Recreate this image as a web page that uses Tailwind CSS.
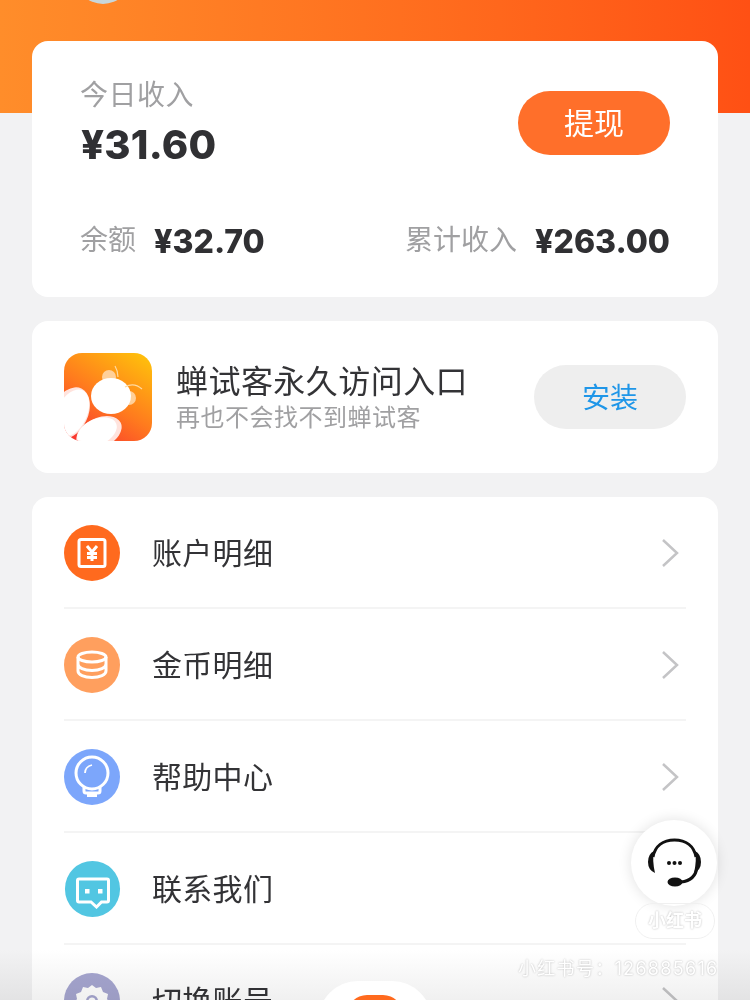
<!DOCTYPE html>
<html lang="zh-CN">
<head>
    <meta charset="UTF-8">
    <meta name="viewport" content="width=device-width, initial-scale=1.0">
    <title>我的</title>
    <script src="https://cdn.jsdelivr.net/npm/@tailwindcss/browser@4"></script>
</head>
<body class="bg-[#f2f2f3] font-['Inter','Noto_Sans_CJK_SC',sans-serif]">
    <div class="relative h-[1000px] w-[750px] overflow-hidden">
        <!-- orange header -->
        <div class="h-[113px] bg-gradient-to-r from-[#ff8d2a] to-[#ff5014]">
            <div class="relative left-[75px] top-[-52px] h-[56px] w-[56px] rounded-full bg-[#c8d6da]"></div>
        </div>

        <div class="mt-[-72px] flex flex-col gap-6 px-8">
            <!-- income -->
            <div class="flex h-[256px] flex-col justify-between rounded-2xl bg-white px-12 pt-[34px] pb-[35px]">
                <div class="flex items-start justify-between">
                    <div>
                        <div class="text-[28px] leading-[40px] tracking-[0.5px] text-[#a0a0a2]">今日收入</div>
                        <div class="mt-[6px] ml-[1px] text-[40px] leading-[48px] tracking-[0.2px] font-extrabold text-[#303033]">¥31.60</div>
                    </div>
                    <button class="mt-4 h-16 w-[152px] rounded-full bg-[#ff6f2a] text-[30px] text-white">提现</button>
                </div>
                <div class="flex items-center justify-between">
                    <div class="flex items-center gap-[18px]">
                        <span class="text-[28px] leading-10 text-[#a0a0a2]">余额</span>
                        <span class="mt-[4px] text-[32px] leading-10 font-extrabold text-[#303033]">¥32.70</span>
                    </div>
                    <div class="flex items-center gap-[18px]">
                        <span class="text-[28px] leading-10 text-[#a0a0a2]">累计收入</span>
                        <span class="mt-[4px] text-[32px] leading-10 font-extrabold text-[#303033]">¥263.00</span>
                    </div>
                </div>
            </div>

            <!-- install -->
            <div class="flex h-[152px] items-center rounded-2xl bg-white px-8">
                <svg class="h-[88px] w-[88px] shrink-0" viewBox="0 0 88 88">
                    <defs>
                        <linearGradient id="appbg" x1="0.85" y1="0" x2="0.2" y2="1">
                            <stop offset="0" stop-color="#ffbe0c"/>
                            <stop offset="0.55" stop-color="#ff7a1e"/>
                            <stop offset="1" stop-color="#f9382f"/>
                        </linearGradient>
                        <clipPath id="appclip"><rect width="88" height="88" rx="18"/></clipPath>
                    </defs>
                    <g clip-path="url(#appclip)">
                        <rect width="88" height="88" fill="url(#appbg)"/>
                        <ellipse cx="6" cy="60" rx="18" ry="27" transform="rotate(25 6 60)" fill="#ffe3dd"/>
                        <ellipse cx="8" cy="60" rx="15" ry="25" transform="rotate(25 8 60)" fill="#fff"/>
                        <ellipse cx="35" cy="80" rx="24" ry="15" transform="rotate(-25 35 80)" fill="#ffe3dd"/>
                        <ellipse cx="33" cy="79" rx="21" ry="13" transform="rotate(-25 33 79)" fill="#fff"/>
                        <circle cx="45" cy="24" r="7" fill="#ffd09a"/>
                        <circle cx="65" cy="45" r="7" fill="#ffd09a"/>
                        <ellipse cx="47" cy="43" rx="20" ry="18" fill="#fff"/>
                        <path d="M51 13q3 5 3 11M61 34q9-5 17 2" fill="none" stroke="#ffd9a0" stroke-width="1.200"/>
                    </g>
                </svg>
                <div class="ml-6 flex-1 pt-[2px]">
                    <div class="text-[32px] leading-[38px] tracking-[0.45px] text-[#333336]">蝉试客永久访问入口</div>
                    <div class="mt-[2px] text-2xl leading-[30px] tracking-[0.5px] text-[#a0a0a2]">再也不会找不到蝉试客</div>
                </div>
                <button class="h-16 w-[152px] rounded-full bg-[#eeeeee] pt-[2px] text-[28px] text-[#1f96e8]">安装</button>
            </div>

            <!-- menu -->
            <div class="rounded-t-2xl bg-white px-8">
                <div class="flex h-[112px] items-center border-b-2 border-[#f4f4f4] pt-0.5">
                    <span class="flex h-14 w-14 items-center justify-center rounded-full bg-[#ff6a1e]">
                        <svg class="h-8 w-8" viewBox="0 0 32 32" fill="none" stroke="#fff" stroke-width="3">
                            <rect x="3" y="2.500" width="26" height="27" rx="2"/>
                            <path d="M11 9l5 6 5-6M16 15v9M11 16.500h10M11 20.500h10" stroke-width="3"/>
                        </svg>
                    </span>
                    <span class="ml-8 flex-1 text-[30px] tracking-[0.3px] text-[#333336]">账户明细</span>
                    <svg class="mr-1.5 h-[30px] w-5" viewBox="0 0 20 30" fill="none" stroke="#c4c4c6" stroke-width="2.500"><path d="M3 2l14 13L3 28"/></svg>
                </div>
                <div class="flex h-[112px] items-center border-b-2 border-[#f4f4f4] pt-0.5">
                    <span class="flex h-14 w-14 items-center justify-center rounded-full bg-[#ff9f5e]">
                        <svg class="h-9 w-9" viewBox="0 0 36 36" fill="none" stroke="#fff" stroke-width="3">
                            <ellipse cx="18" cy="10" rx="14" ry="5"/>
                            <path d="M4 10v14c0 3.500 6 6.500 14 6.500s14-3 14-6.500V10M4 17c0 3.500 6 6.500 14 6.500s14-3 14-6.500"/>
                        </svg>
                    </span>
                    <span class="ml-8 flex-1 text-[30px] tracking-[0.3px] text-[#333336]">金币明细</span>
                    <svg class="mr-1.5 h-[30px] w-5" viewBox="0 0 20 30" fill="none" stroke="#c4c4c6" stroke-width="2.500"><path d="M3 2l14 13L3 28"/></svg>
                </div>
                <div class="flex h-[112px] items-center border-b-2 border-[#f4f4f4] pt-0.5">
                    <span class="flex h-14 w-14 items-center justify-center rounded-full bg-[#7ca6fb]">
                        <svg class="h-11 w-11" viewBox="0 0 44 44" fill="none" stroke="#fff" stroke-width="3">
                            <circle cx="22" cy="18" r="16"/>
                            <path d="M14 32v4q0 2 2 2h12q2 0 2-2v-4"/>
                            <path d="M17 40.500h10" stroke-width="3"/>
                            <path d="M15 18c0-4 3-7 7-8" stroke-width="1.800"/>
                        </svg>
                    </span>
                    <span class="ml-8 flex-1 text-[30px] tracking-[0.3px] text-[#333336]">帮助中心</span>
                    <svg class="mr-1.5 h-[30px] w-5" viewBox="0 0 20 30" fill="none" stroke="#c4c4c6" stroke-width="2.500"><path d="M3 2l14 13L3 28"/></svg>
                </div>
                <div class="flex h-[112px] items-center border-b-2 border-[#f4f4f4] pt-0.5">
                    <span class="ml-[1px] flex h-14 w-[55px] items-center justify-center rounded-full bg-[#52c6e2]">
                        <svg class="mt-1 h-9 w-9" viewBox="0 0 36 36" fill="none" stroke="#fff" stroke-width="3">
                            <path d="M4 6h28a1.500 1.500 0 0 1 1.500 1.500v20a1.500 1.500 0 0 1-1.500 1.500h-5.500l-5 5-5.500-5H4a1.500 1.500 0 0 1-1.500-1.500v-20A1.500 1.500 0 0 1 4 6z"/>
                            <rect x="10" y="16" width="4.500" height="4.500" fill="#fff" stroke="none"/>
                            <rect x="23" y="16" width="4.500" height="4.500" fill="#fff" stroke="none"/>
                        </svg>
                    </span>
                    <span class="ml-8 flex-1 text-[30px] tracking-[0.3px] text-[#333336]">联系我们</span>
                </div>
                <div class="flex h-[112px] items-center">
                    <span class="flex h-14 w-14 items-center justify-center rounded-full bg-[#a6a6d0]">
                        <svg class="h-10 w-10" viewBox="0 0 40 40">
                            <path d="M20 4l4 3 5-1 2 5 5 2-1 5 3 4-3 4 1 5-5 2-2 5-5-1-4 3-4-3-5 1-2-5-5-2 1-5-3-4 3-4-1-5 5-2 2-5 5 1z" fill="#fff"/>
                            <circle cx="20" cy="20" r="6" fill="#a6a6d0"/>
                            <circle cx="20" cy="20" r="3.500" fill="#fff"/>
                        </svg>
                    </span>
                    <span class="ml-8 flex-1 text-[30px] tracking-[0.3px] text-[#333336]">切换账号</span>
                    <svg class="mr-1.5 h-[30px] w-5" viewBox="0 0 20 30" fill="none" stroke="#c4c4c6" stroke-width="2.500"><path d="M3 2l14 13L3 28"/></svg>
                </div>
            </div>
        </div>

        <!-- bottom fade + tab bump -->
        <div class="absolute bottom-0 left-0 h-[50px] w-full bg-gradient-to-b from-white to-[#f0f0f0] mix-blend-multiply"></div>
        <div class="absolute left-[318px] top-[981px] h-10 w-[114px] rounded-t-[40px] bg-white">
            <div class="mx-auto mt-[14px] h-10 w-[56px] rounded-full bg-[#ff6a1e]"></div>
        </div>

        <!-- customer service button -->
        <div class="absolute left-[631px] top-[820px] flex h-[86px] w-[86px] items-center justify-center rounded-full bg-white shadow-[0_0_14px_rgba(0,0,0,0.12)]">
            <svg class="h-[56px] w-[56px]" viewBox="0 0 56 56" fill="none">
                <path d="M7 22C9 11 17 5 28.500 5S48 11 50 22M51 32c-1 9-7 14-16 15" stroke="#111" stroke-width="3"/>
                <path d="M8 16q-2 9 1 22Q2 35 2 27t6-11zM49 16q2 9-1 22q7-3 7-11t-6-11z" fill="#111"/>
                <ellipse cx="29" cy="47" rx="7.500" ry="4.500" fill="#111"/>
                <circle cx="23" cy="28" r="2" fill="#111"/>
                <circle cx="28.500" cy="28" r="2" fill="#111"/>
                <circle cx="34" cy="28" r="2" fill="#111"/>
            </svg>
        </div>

        <!-- watermark -->
        <div class="absolute left-[635px] top-[903px] flex h-[36px] w-[80px] items-center justify-center rounded-full border border-[#f0f0f0] text-lg font-bold text-white blur-[0.6px] [text-shadow:0_0_2px_rgba(0,0,0,0.3)]">小红书</div>
        <div class="absolute left-[518px] top-[955px] whitespace-nowrap text-lg tracking-[1.3px] text-white blur-[0.6px] [text-shadow:0_0_2px_rgba(0,0,0,0.3)]">小红书号：126885616</div>
    </div>
</body>
</html>
